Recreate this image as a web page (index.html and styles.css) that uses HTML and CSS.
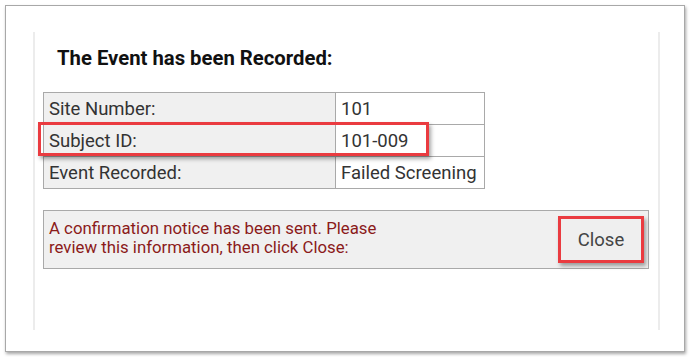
FILE: index.html
```html
<!DOCTYPE html>
<html lang="en">
<head>
    <meta charset="UTF-8">
    <title>Event Recorded</title>
    <link rel="stylesheet" href="styles.css">
</head>
<body>
    <div class="frame">
        <div class="dialog">
            <h2 class="title">The Event has been Recorded:</h2>
            <div class="table-wrap">
                <table class="info-table">
                    <tr>
                        <td class="label">Site Number:</td>
                        <td class="value">101</td>
                    </tr>
                    <tr>
                        <td class="label">Subject ID:</td>
                        <td class="value">101-009</td>
                    </tr>
                    <tr>
                        <td class="label">Event Recorded:</td>
                        <td class="value">Failed Screening</td>
                    </tr>
                </table>
                <div class="mark mark-row"></div>
            </div>
            <div class="notice">
                <p class="notice-text">A confirmation notice has been sent. Please<br>review this information, then click Close:</p>
                <button class="btn-close">Close</button>
            </div>
        </div>
    </div>
</body>
</html>
```

FILE: styles.css
```css
body {
    margin: 0;
    background: #fff;
    font-family: Roboto, 'Liberation Sans', sans-serif;
}

.frame {
    margin: 5px;
    width: 680px;
    height: 347px;
    border: 1px solid #a8a8a8;
    box-shadow: 1px 2px 3px rgba(0, 0, 0, 0.35);
    padding: 26px 0 0 27px;
    box-sizing: border-box;
}

.dialog {
    width: 627px;
    height: 298px;
    border-left: 2px solid #ececec;
    border-right: 2px solid #ececec;
    box-sizing: border-box;
    padding: 13px 0 0 8px;
}

.title {
    margin: 0 0 21px 14px;
    font-size: 20.3px;
    font-weight: 700;
    color: #111;
    line-height: 26px;
}

.table-wrap {
    position: relative;
    width: 442px;
}

.info-table {
    border-collapse: collapse;
    width: 442px;
    font-size: 18.5px;
    color: #333;
}

.info-table td {
    border: 1px solid #a9a9a9;
    height: 32px;
    padding: 0 0 0 5px;
    box-sizing: border-box;
}

.info-table .label {
    background: #f0f0f0;
    width: 292px;
}

.info-table .value {
    background: #fff;
}

.mark {
    position: absolute;
    border: 3px solid #ea3b40;
    box-shadow: 2px 3px 4px rgba(0, 0, 0, 0.35);
    box-sizing: border-box;
}

.mark-row {
    left: -5px;
    top: 30px;
    width: 391px;
    height: 34px;
}

.notice {
    margin-top: 21px;
    width: 606px;
    height: 59px;
    background: #f0f0f0;
    border: 1px solid #a9a9a9;
    box-sizing: border-box;
    display: flex;
    align-items: flex-start;
    justify-content: space-between;
    padding: 0 4px 0 5px;
}

.notice-text {
    margin: 8px 0 0 0;
    font-size: 16.8px;
    line-height: 19px;
    color: #8b1a1a;
}

.btn-close {
    margin-top: 5px;
    width: 86px;
    height: 47px;
    background: #efefef;
    border: 3px solid #ea3b40;
    box-shadow: 2px 3px 4px rgba(0, 0, 0, 0.35);
    font-family: Roboto, 'Liberation Sans', sans-serif;
    font-size: 18.5px;
    color: #444;
    padding: 0;
}
```
